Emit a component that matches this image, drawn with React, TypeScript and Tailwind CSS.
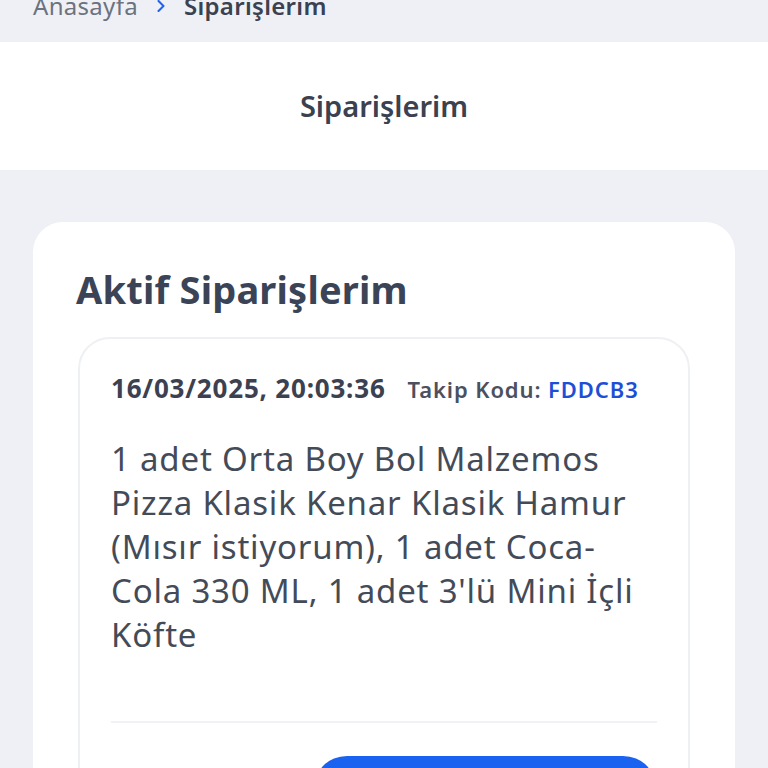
import { ChevronRight } from 'lucide-react'

const font = { fontFamily: '"Noto Sans", "Open Sans", sans-serif' }

export default function App() {
  return (
    <div style={font} className="min-h-[768px] bg-[#eff0f5] overflow-hidden">
      {/* Breadcrumb (scrolled partly out of view) */}
      <div className="-mt-[22px] h-[64px] flex items-center gap-[13px] px-[33px] pb-[8px]">
        <span className="text-[24px] tracking-[0.3px] text-[#6b7280]">Anasayfa</span>
        <ChevronRight size={20} strokeWidth={2.5} className="text-[#2563eb]" />
        <span className="text-[24px] tracking-[0.3px] font-semibold text-[#3b4150]">Siparişlerim</span>
      </div>

      {/* Page header */}
      <div className="h-[128px] bg-white flex items-center justify-center">
        <h1 className="text-[29px] font-semibold text-[#3b4150]">Siparişlerim</h1>
      </div>

      {/* Orders card */}
      <div className="mt-[52px] mx-[33px] rounded-[30px] bg-white px-[45px] pt-[45px] pb-[40px]">
        <h2 className="-ml-[2px] text-[38px] leading-[44px] tracking-[0.2px] font-bold text-[#3a4456]">Aktif Siparişlerim</h2>

        <div className="mt-[26px] rounded-[32px] border-2 border-[#eef0f3] px-[31px] pt-[33px] pb-[30px]">
          <div className="flex items-baseline gap-[22px]">
            <span className="text-[26px] leading-[32px] tracking-[0.8px] font-bold text-[#3b4150]">16/03/2025, 20:03:36</span>
            <span className="text-[22px] tracking-[0.9px] font-semibold text-[#4b5160]">
              Takip Kodu: <span className="text-[#1d4fd6]">FDDCB3</span>
            </span>
          </div>

          <p className="mt-[31px] text-[33px] leading-[44px] tracking-[0.8px] text-[#444b58]">
            1 adet Orta Boy Bol Malzemos Pizza Klasik Kenar Klasik Hamur (Mısır istiyorum), 1 adet Coca-Cola 330 ML, 1 adet 3'lü Mini İçli Köfte
          </p>

          <div className="mt-[64px] h-[2px] bg-[#f1f2f5]" />

          <div className="mt-[33px] flex justify-end">
            <button className="h-[68px] w-[344px] rounded-[34px] bg-[#1a62f0] text-white text-[22px] font-semibold">
              Sipariş Detayı
            </button>
          </div>
        </div>
      </div>
    </div>
  )
}
